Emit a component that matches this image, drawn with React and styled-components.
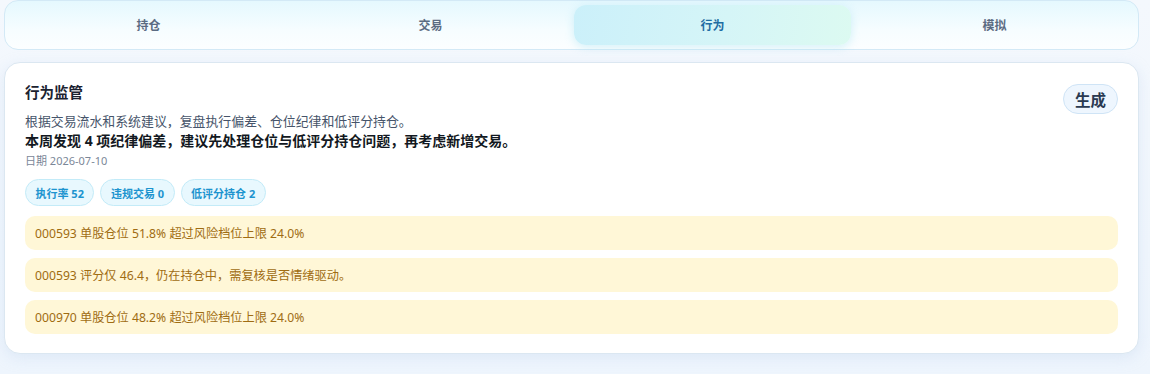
import React, { useState } from "react";
import styled, { createGlobalStyle } from "styled-components";

const GlobalStyle = createGlobalStyle`
  html, body {
    margin: 0;
    padding: 0;
    background: linear-gradient(180deg, #f4f8fd 0%, #eef5fd 100%);
    font-family: "Noto Sans", "Noto Sans CJK SC", sans-serif;
  }
  * { box-sizing: border-box; }
`;

const Page = styled.div`
  padding: 0 11px 20px 4px;
  display: flex;
  flex-direction: column;
  gap: 12px;
  min-height: 374px;
`;

const TabBar = styled.nav`
  display: grid;
  grid-template-columns: repeat(4, 1fr);
  gap: 5px;
  padding: 4px 5px;
  height: 50px;
  border: 1px solid #d3e9f6;
  border-radius: 14px;
  background: linear-gradient(180deg, #e5f8fe 0%, #f6fdff 60%, #fcfeff 100%);
`;

const Tab = styled.button`
  border: none;
  border-radius: 12px;
  font-family: inherit;
  font-size: 12px;
  font-weight: 700;
  cursor: pointer;
  color: ${(p) => (p.$active ? "#1f6da3" : "#5b6b82")};
  background: ${(p) =>
    p.$active
      ? "linear-gradient(100deg, #cbf0fa 0%, #d5f5f7 55%, #dcfaf1 100%)"
      : "transparent"};
  box-shadow: ${(p) =>
    p.$active ? "0 2px 10px rgba(160, 225, 240, 0.45)" : "none"};
`;

const Card = styled.section`
  background: #ffffff;
  border: 1px solid #dbe7f1;
  border-radius: 16px;
  padding: 20px 20px 19px;
  box-shadow: 0 4px 14px rgba(190, 210, 235, 0.35);
  display: flex;
  flex-direction: column;
`;

const Header = styled.div`
  display: flex;
  justify-content: space-between;
  align-items: flex-start;
`;

const HeadText = styled.div`
  display: flex;
  flex-direction: column;
`;

const Title = styled.h2`
  margin: -1px 0 0;
  font-size: 14.5px;
  font-weight: 700;
  color: #1b2230;
  line-height: 20px;
`;

const Desc = styled.p`
  margin: 10px 0 0;
  font-size: 12.9px;
  color: #46546a;
  line-height: 18px;
`;

const Summary = styled.p`
  margin: 1px 0 0;
  font-size: 14px;
  font-weight: 700;
  color: #121821;
  line-height: 20px;
`;

const DateLine = styled.div`
  margin-top: 2px;
  font-size: 11px;
  color: #7b8798;
  line-height: 16px;
`;

const GenButton = styled.button`
  margin-top: 1px;
  height: 30px;
  padding: 0 11px;
  border-radius: 15px;
  border: 1px solid #cfe4f6;
  background: #eef6fe;
  color: #2a3a52;
  font-family: inherit;
  font-size: 15.5px;
  font-weight: 700;
  cursor: pointer;
`;

const Chips = styled.div`
  display: flex;
  gap: 6px;
  margin-top: 10px;
`;

const Chip = styled.span`
  display: inline-flex;
  align-items: center;
  height: 27px;
  padding: 0 9.5px;
  border-radius: 14px;
  border: 1px solid #c3ebf8;
  background: #e8f8fe;
  color: #1d94cf;
  font-size: 11px;
  font-weight: 700;
`;

const Alerts = styled.div`
  display: flex;
  flex-direction: column;
  gap: 8px;
  margin-top: 10px;
`;

const Alert = styled.div`
  background: #fff7d7;
  border-radius: 10px;
  padding: 0 10px;
  height: 34px;
  display: flex;
  align-items: center;
  font-size: 12.2px;
  color: #a06c12;
`;

const tabs = ["持仓", "交易", "行为", "模拟"];
const chips = ["执行率 52", "违规交易 0", "低评分持仓 2"];
const alerts = [
  "000593 单股仓位 51.8% 超过风险档位上限 24.0%",
  "000593 评分仅 46.4，仍在持仓中，需复核是否情绪驱动。",
  "000970 单股仓位 48.2% 超过风险档位上限 24.0%",
];

export default function App() {
  const [active, setActive] = useState("行为");
  return (
    <>
      <GlobalStyle />
      <Page>
        <TabBar>
          {tabs.map((t) => (
            <Tab key={t} $active={t === active} onClick={() => setActive(t)}>
              {t}
            </Tab>
          ))}
        </TabBar>
        <Card>
          <Header>
            <HeadText>
              <Title>行为监管</Title>
              <Desc>根据交易流水和系统建议，复盘执行偏差、仓位纪律和低评分持仓。</Desc>
              <Summary>本周发现 4 项纪律偏差，建议先处理仓位与低评分持仓问题，再考虑新增交易。</Summary>
              <DateLine>日期 2026-07-10</DateLine>
            </HeadText>
            <GenButton>生成</GenButton>
          </Header>
          <Chips>
            {chips.map((c) => (
              <Chip key={c}>{c}</Chip>
            ))}
          </Chips>
          <Alerts>
            {alerts.map((a, i) => (
              <Alert key={i}>{a}</Alert>
            ))}
          </Alerts>
        </Card>
      </Page>
    </>
  );
}
